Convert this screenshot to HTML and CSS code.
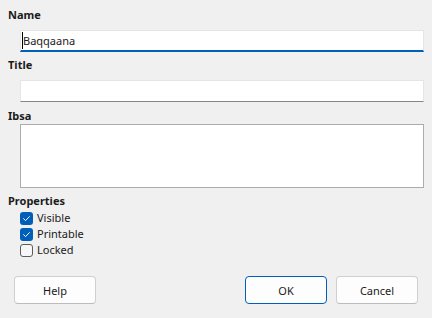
FILE: index.html
```html
<!DOCTYPE html>
<html lang="en">
<head>
  <meta charset="UTF-8">
  <title>Name</title>
  <link rel="stylesheet" href="styles.css">
</head>
<body>

  <div class="dialog">
    <label class="group-label name-label">Name</label>
    <div class="field">
      <input class="text-input focused" type="text" value="Baqqaana">
      <span class="caret"></span>
    </div>

    <label class="group-label title-label">Title</label>
    <div class="field">
      <input class="text-input" type="text" value="">
    </div>

    <label class="group-label desc-label">Ibsa</label>
    <textarea class="desc-input"></textarea>

    <div class="group-label props-label">Properties</div>
    <div class="checks">
      <div class="check-row">
        <span class="box checked">
          <svg width="13" height="13" viewBox="0 0 13 13"><path d="M3.6 6.7 L5.6 8.6 L9.4 4.6" fill="none" stroke="#fff" stroke-width="1" stroke-linecap="round" stroke-linejoin="round"/></svg>
        </span>
        <span>Visible</span>
      </div>
      <div class="check-row">
        <span class="box checked">
          <svg width="13" height="13" viewBox="0 0 13 13"><path d="M3.6 6.7 L5.6 8.6 L9.4 4.6" fill="none" stroke="#fff" stroke-width="1" stroke-linecap="round" stroke-linejoin="round"/></svg>
        </span>
        <span>Printable</span>
      </div>
      <div class="check-row">
        <span class="box"></span>
        <span>Locked</span>
      </div>
    </div>

    <div class="button-bar">
      <button class="btn">Help</button>
      <div class="spacer"></div>
      <button class="btn default">OK</button>
      <button class="btn">Cancel</button>
    </div>
  </div>

</body>
</html>
```

FILE: styles.css
```css
body {
  margin: 0;
  padding: 0;
  background: #f0f0f0;
  font-family: 'Noto Sans', 'Open Sans', sans-serif;
  font-size: 11px;
  color: #1a1a1a;
}

.dialog {
  display: flex;
  flex-direction: column;
  padding: 7px 8px 0 8px;
}

.group-label {
  display: block;
  height: 16px;
  line-height: 16px;
  font-weight: bold;
  color: #1b1b1b;
}

.title-label {
  margin-top: 5px;
}

.desc-label {
  margin-top: 6px;
}

.props-label {
  margin-top: 5px;
}

.field {
  position: relative;
  margin: 7px 0 0 12px;
}

.text-input {
  box-sizing: border-box;
  display: block;
  width: 100%;
  height: 22px;
  margin: 0;
  padding: 0 2px;
  border: 1px solid #e5e5e5;
  border-bottom: 1px solid #868686;
  border-radius: 0;
  background: #fff;
  font-family: inherit;
  font-size: 11px;
  color: #1a1a1a;
  outline: none;
}

.text-input.focused {
  border-bottom: 2px solid #005fb8;
}

.caret {
  position: absolute;
  left: 2px;
  top: 2px;
  width: 1px;
  height: 17px;
  background: #000;
}

.desc-input {
  box-sizing: border-box;
  display: block;
  width: calc(100% - 12px);
  height: 64px;
  margin: 0 0 0 12px;
  border: 1px solid #acacac;
  background: #fff;
  resize: none;
  outline: none;
}

.checks {
  display: flex;
  flex-direction: column;
  margin: 1px 0 0 12px;
}

.check-row {
  display: flex;
  align-items: center;
  gap: 4px;
  height: 16px;
  line-height: 16px;
}

.box {
  box-sizing: border-box;
  width: 13px;
  height: 13px;
  border: 1px solid #5d5d5d;
  border-radius: 3px;
  background: #f7f7f7;
}

.box.checked {
  border: none;
  background: #005fb8;
}

.box svg {
  display: block;
}

.button-bar {
  display: flex;
  gap: 9px;
  margin: 18px 6px 0 6px;
}

.spacer {
  flex: 1;
}

.btn {
  box-sizing: border-box;
  width: 82px;
  height: 28px;
  padding: 0;
  background: #fdfdfd;
  border: 1px solid #d0d0d0;
  border-bottom-color: #bcbcbc;
  border-radius: 4px;
  font-family: inherit;
  font-size: 11px;
  color: #1a1a1a;
}

.btn.default {
  border: 1px solid #005fb8;
}
```
